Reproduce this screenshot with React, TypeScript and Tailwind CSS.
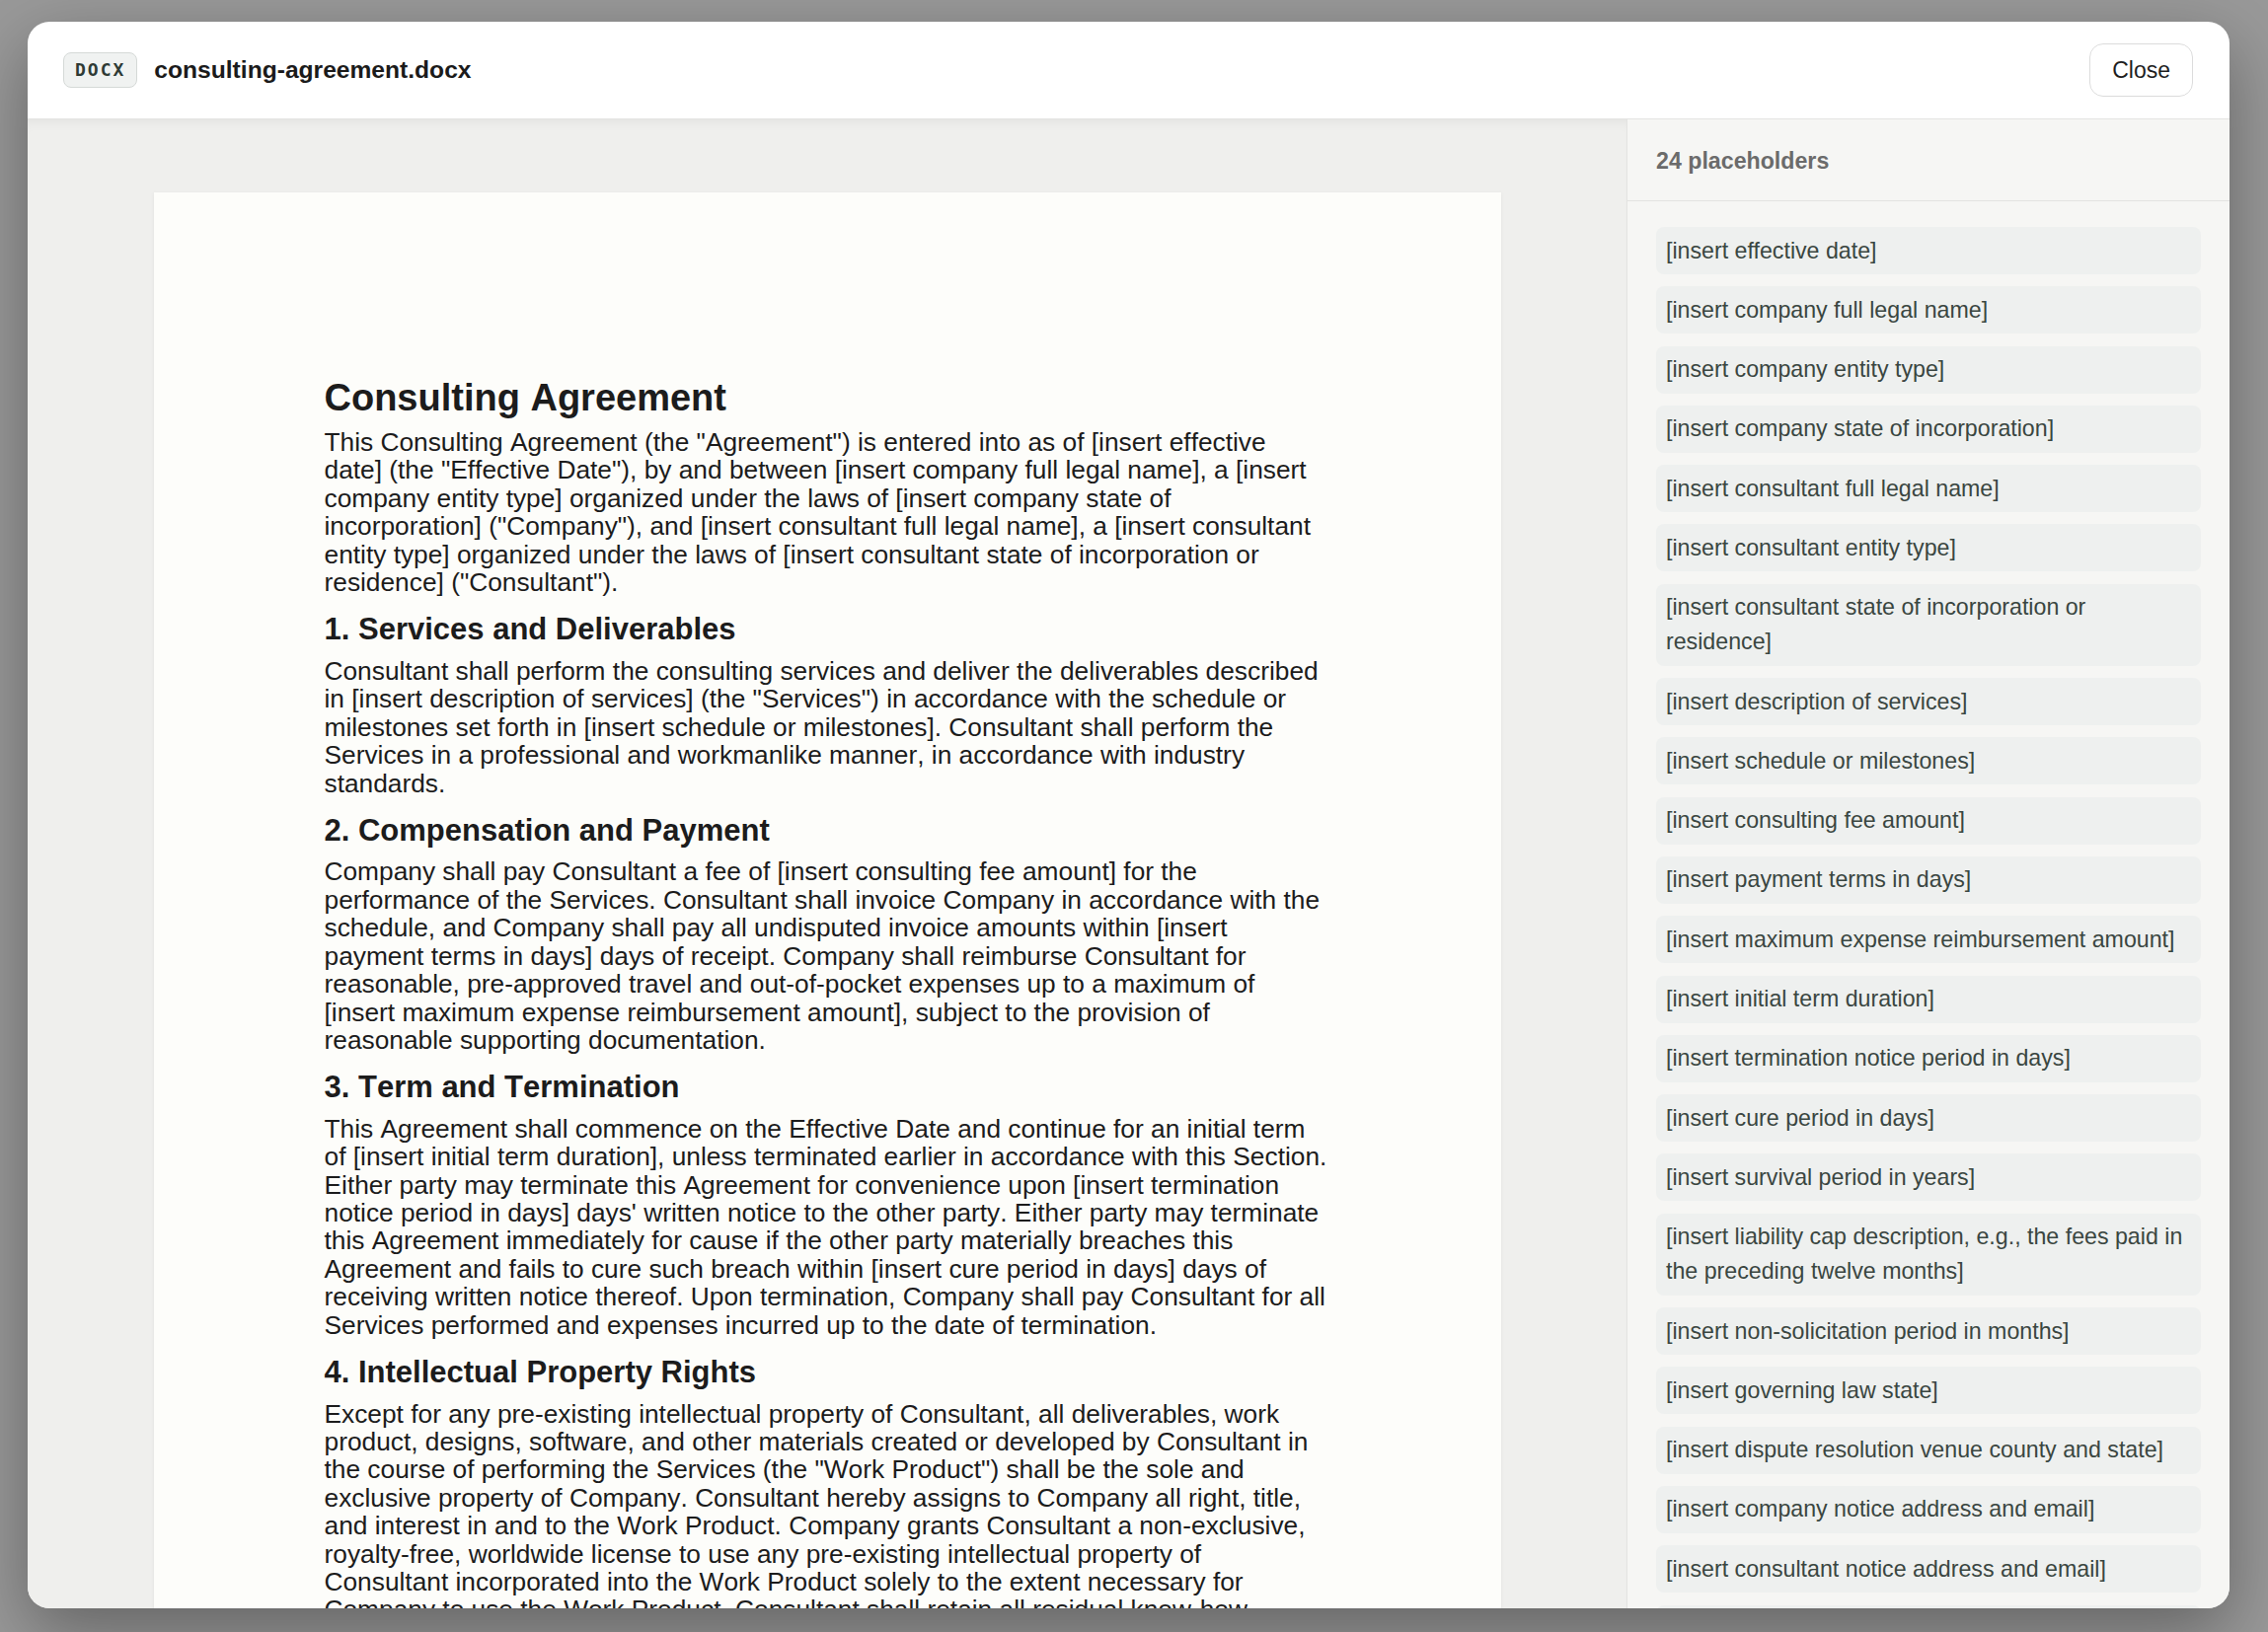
import React from 'react'

const placeholders = [
  '[insert effective date]',
  '[insert company full legal name]',
  '[insert company entity type]',
  '[insert company state of incorporation]',
  '[insert consultant full legal name]',
  '[insert consultant entity type]',
  '[insert consultant state of incorporation or residence]',
  '[insert description of services]',
  '[insert schedule or milestones]',
  '[insert consulting fee amount]',
  '[insert payment terms in days]',
  '[insert maximum expense reimbursement amount]',
  '[insert initial term duration]',
  '[insert termination notice period in days]',
  '[insert cure period in days]',
  '[insert survival period in years]',
  '[insert liability cap description, e.g., the fees paid in the preceding twelve months]',
  '[insert non-solicitation period in months]',
  '[insert governing law state]',
  '[insert dispute resolution venue county and state]',
  '[insert company notice address and email]',
  '[insert consultant notice address and email]',
  '[insert company signatory name and title]',
  '[insert consultant signatory name and title]',
]

const sections = [
  {
    title: '1. Services and Deliverables',
    body: 'Consultant shall perform the consulting services and deliver the deliverables described in [insert description of services] (the "Services") in accordance with the schedule or milestones set forth in [insert schedule or milestones]. Consultant shall perform the Services in a professional and workmanlike manner, in accordance with industry standards.',
  },
  {
    title: '2. Compensation and Payment',
    body: 'Company shall pay Consultant a fee of [insert consulting fee amount] for the performance of the Services. Consultant shall invoice Company in accordance with the schedule, and Company shall pay all undisputed invoice amounts within [insert payment terms in days] days of receipt. Company shall reimburse Consultant for reasonable, pre-approved travel and out-of-pocket expenses up to a maximum of [insert maximum expense reimbursement amount], subject to the provision of reasonable supporting documentation.',
  },
  {
    title: '3. Term and Termination',
    body: "This Agreement shall commence on the Effective Date and continue for an initial term of [insert initial term duration], unless terminated earlier in accordance with this Section. Either party may terminate this Agreement for convenience upon [insert termination notice period in days] days' written notice to the other party. Either party may terminate this Agreement immediately for cause if the other party materially breaches this Agreement and fails to cure such breach within [insert cure period in days] days of receiving written notice thereof. Upon termination, Company shall pay Consultant for all Services performed and expenses incurred up to the date of termination.",
  },
  {
    title: '4. Intellectual Property Rights',
    body: 'Except for any pre-existing intellectual property of Consultant, all deliverables, work product, designs, software, and other materials created or developed by Consultant in the course of performing the Services (the "Work Product") shall be the sole and exclusive property of Company. Consultant hereby assigns to Company all right, title, and interest in and to the Work Product. Company grants Consultant a non-exclusive, royalty-free, worldwide license to use any pre-existing intellectual property of Consultant incorporated into the Work Product solely to the extent necessary for Company to use the Work Product. Consultant shall retain all residual know-how, techniques and general skills developed in the course of performing the Services.',
  },
  {
    title: '5. Confidentiality',
    body: 'Consultant shall hold in strict confidence all confidential information of Company disclosed in connection with this Agreement and shall not use such information except as necessary to perform the Services. The obligations in this Section shall survive for [insert survival period in years] years following termination of this Agreement.',
  },
]

export default function App() {
  return (
    <div
      className="h-[1654px] w-full overflow-hidden bg-[#999999] pt-[22px] pl-[28px] pr-[39px] pb-[24px]"
      style={{ fontFamily: '"Liberation Sans", Arial, Helvetica, sans-serif' }}
    >
      <div className="flex h-full flex-col overflow-hidden rounded-[22px] bg-white shadow-[0_24px_70px_rgba(0,0,0,0.35)]">
        {/* Header */}
        <header className="flex h-[99px] shrink-0 items-center justify-between border-b border-[#e4e4e2] pl-[36px] pr-[37px]">
          <div className="flex items-center gap-[17px]">
            <span
              className="flex h-[36px] items-center rounded-[8px] border border-[#d5d9d7] bg-[#f0f2f1] px-[11px] text-[18px] font-bold tracking-[2px] text-[#2e3a35]"
              style={{ fontFamily: '"DejaVu Sans Mono", "Liberation Mono", monospace' }}
            >
              DOCX
            </span>
            <span className="text-[24.6px] font-bold text-[#1b1b1b]">consulting-agreement.docx</span>
          </div>
          <button className="flex h-[54px] items-center rounded-[14px] border border-[#dcdcdc] bg-white px-[22px] text-[23px] text-[#1f1f1f]">
            Close
          </button>
        </header>

        <div className="flex min-h-0 flex-1">
          {/* Document preview */}
          <main className="min-w-0 flex-1 overflow-hidden bg-[#efefed] shadow-[inset_0_10px_14px_-10px_rgba(0,0,0,0.08)]">
            <div className="mx-auto mt-[74px] w-[1365px] bg-[#fdfdfa] pt-[188px] pl-[173px] shadow-[0_1px_4px_rgba(0,0,0,0.06)]">
              <div className="w-[1018px] pb-[200px] text-[#1c1c1c] [font-kerning:none]">
                <h1 className="mb-[10px] text-[38px] font-bold leading-[41px]">Consulting Agreement</h1>
                <p className="text-[26.3px] leading-[28.4px]">
                  This Consulting Agreement (the "Agreement") is entered into as of [insert effective date] (the "Effective Date"), by and between [insert company full legal name], a [insert company entity type] organized under the laws of [insert company state of incorporation] ("Company"), and [insert consultant full legal name], a [insert consultant entity type] organized under the laws of [insert consultant state of incorporation or residence] ("Consultant").
                </p>
                {sections.map((s) => (
                  <section key={s.title}>
                    <h2 className="mt-[17px] mb-[11px] text-[31px] font-bold leading-[33.5px]">{s.title}</h2>
                    <p className="text-[26.3px] leading-[28.4px]">{s.body}</p>
                  </section>
                ))}
              </div>
            </div>
          </main>

          {/* Placeholder list */}
          <aside className="flex w-[611px] shrink-0 flex-col overflow-hidden border-l border-[#e3e3e1] bg-[#f6f6f4]">
            <div className="flex h-[83px] shrink-0 items-center border-b border-[#e3e3e1] px-[29px]">
              <span className="mt-[2px] text-[23.2px] font-bold text-[#6b6b6b]">24 placeholders</span>
            </div>
            <ul className="flex flex-col gap-[12.3px] px-[29px] pt-[26px]">
              {placeholders.map((p) => (
                <li
                  key={p}
                  className="rounded-[8px] bg-[#eef0ef] px-[10px] py-[6.5px] text-[23.2px] leading-[35px] text-[#3a4641]"
                >
                  {p}
                </li>
              ))}
            </ul>
          </aside>
        </div>
      </div>
    </div>
  )
}
